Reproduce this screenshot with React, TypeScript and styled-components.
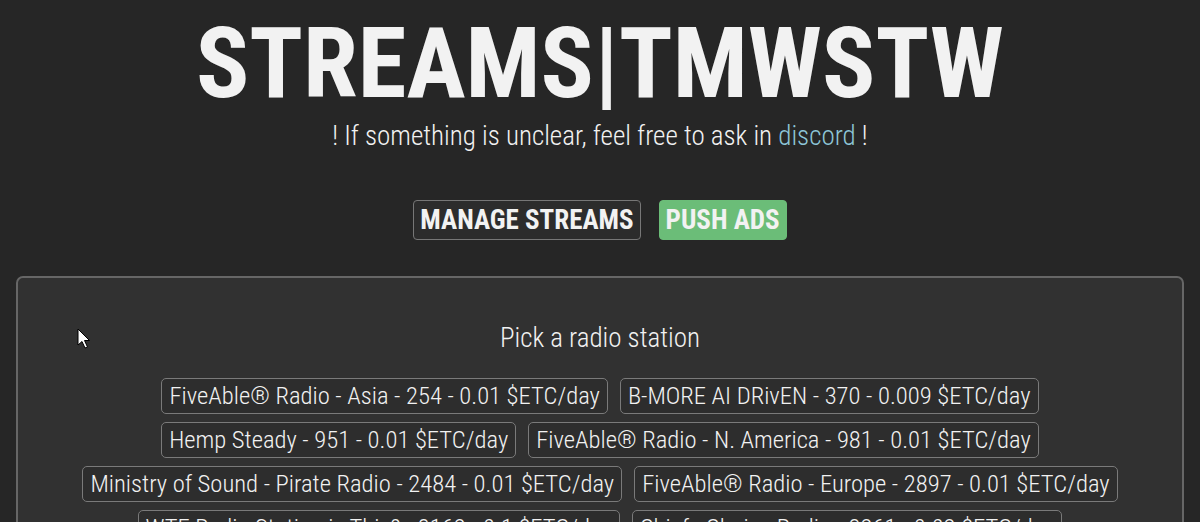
import React from 'react';
import styled, { createGlobalStyle } from 'styled-components';

const GlobalStyle = createGlobalStyle`
  html, body {
    margin: 0;
    background: #262626;
    color: #f2f2f2;
    font-family: 'Roboto', 'Liberation Sans', sans-serif;
    font-stretch: condensed;
  }
`;

interface IStation {
  name: string;
  id: number;
  price: string;
}

const stations: IStation[] = [
  { name: 'FiveAble® Radio - Asia', id: 254, price: '0.01' },
  { name: 'B-MORE AI DRivEN', id: 370, price: '0.009' },
  { name: 'Hemp Steady', id: 951, price: '0.01' },
  { name: 'FiveAble® Radio - N. America', id: 981, price: '0.01' },
  { name: 'Ministry of Sound - Pirate Radio', id: 2484, price: '0.01' },
  { name: 'FiveAble® Radio - Europe', id: 2897, price: '0.01' },
  { name: 'WTF Radio Station is This?', id: 3162, price: '0.1' },
  { name: 'Chiefs Choice Radio', id: 3261, price: '0.02' },
];

const App: React.FC = () => {
  return (
    <Page>
      <GlobalStyle />
      <Header>
        <Title>STREAMS|TMWSTW</Title>
        <Subtitle>
          ! If something is unclear, feel free to ask in <Link href="#">discord</Link> !
        </Subtitle>
      </Header>

      <Nav>
        <NavButton>MANAGE STREAMS</NavButton>
        <NavButton active>PUSH ADS</NavButton>
      </Nav>

      <Panel>
        <PanelTitle>Pick a radio station</PanelTitle>
        <StationList>
          {stations.map(s => (
            <Station key={s.id}>
              {s.name} - {s.id} - {s.price} $ETC/day
            </Station>
          ))}
        </StationList>
      </Panel>

      <Cursor width="14" height="22" viewBox="0 0 14 22">
        <path d="M1 1 L1 17 L5 13.5 L8 20 L10.5 19 L7.5 12.5 L12.5 12.5 Z" fill="#fff" stroke="#000" strokeWidth="1" />
      </Cursor>
    </Page>
  );
};

const Page = styled.div`
  position: relative;
  padding: 0 16px;
`;

const Header = styled.header`
  text-align: center;
`;

const Title = styled.h1`
  margin: 0;
  padding-top: 13px;
  font-size: 99px;
  line-height: 100px;
  font-weight: 700;
  color: #f2f2f2;
`;

const Subtitle = styled.p`
  margin: 7px 0 0;
  font-size: 27px;
  line-height: 32px;
  font-weight: 300;
`;

const Link = styled.a`
  color: #8ec6d8;
  text-decoration: none;
`;

const Nav = styled.nav`
  display: flex;
  justify-content: center;
  gap: 18px;
  margin-top: 48px;
`;

const NavButton = styled.button<{ active?: boolean }>`
  font-family: inherit;
  font-stretch: condensed;
  font-size: 27px;
  font-weight: 700;
  line-height: 36px;
  padding: 1px 6px;
  border-radius: 4px;
  color: #f2f2f2;
  background: ${p => (p.active ? '#6bbd78' : '#2c2c2c')};
  border: 1px solid ${p => (p.active ? '#6bbd78' : '#777')};
`;

const Panel = styled.section`
  margin-top: 36px;
  background: #313131;
  border: 2px solid #666;
  border-radius: 7px;
  padding: 42px 40px 20px;
`;

const PanelTitle = styled.h2`
  margin: 0 0 22px;
  text-align: center;
  font-size: 27px;
  line-height: 36px;
  font-weight: 300;
`;

const StationList = styled.div`
  display: flex;
  flex-wrap: wrap;
  justify-content: center;
  gap: 8px 12px;
`;

const Station = styled.button`
  font-family: inherit;
  font-stretch: condensed;
  font-size: 24.6px;
  font-weight: 300;
  line-height: 32px;
  padding: 1px 7px;
  color: #f2f2f2;
  background: #2d2d2d;
  border: 1px solid #7a7a7a;
  border-radius: 5px;
`;

const Cursor = styled.svg`
  position: absolute;
  left: 77px;
  top: 328px;
`;

export default App;
